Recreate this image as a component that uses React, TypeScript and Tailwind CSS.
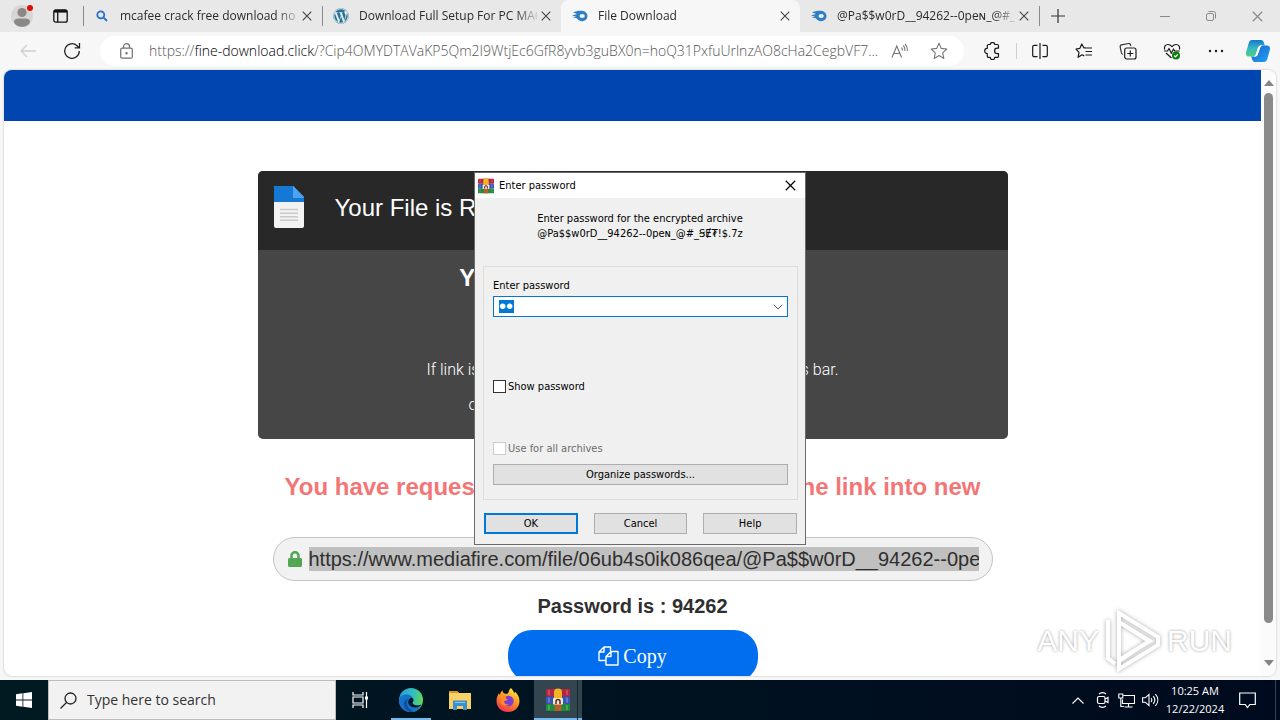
import { ReactNode } from 'react'
import { FaWordpress, FaLock } from 'react-icons/fa'

interface TabProps {
  title: string
  icon: ReactNode
  active?: boolean
}

function CloseIcon({ className = 'w-2.5 h-2.5' }: { className?: string }) {
  return (
    <svg viewBox="0 0 10 10" className={className} fill="none" stroke="currentColor" strokeWidth="1.1">
      <path d="M.7.7l8.6 8.6M9.3.7L.7 9.3" />
    </svg>
  )
}

function MediafireIcon() {
  return (
    <svg viewBox="0 0 16 16" className="w-4 h-4">
      <path
        d="M1 4.6C3.500 3 7 2.400 9.800 2.700c3.400.3 5.700 2.500 5.700 5.300 0 2.900-2.400 5.200-5.300 5.200-2.300 0-3.700-1.200-5-2.400-1-.9-2.400-1.200-4.700-.9 1.300-.9 2.300-1.200 3.600-1.200C3 7.900 2.200 7.800 0 8.200c1.400-1.300 3-1.800 4.800-1.900C3.900 5.400 2.600 4.900 1 4.600z"
        fill="#2f7fc4"
      />
      <ellipse cx="10.200" cy="8" rx="2.600" ry="2.100" fill="#f0f6fb" />
    </svg>
  )
}

function WinrarIcon({ className = 'w-4 h-4' }: { className?: string }) {
  return (
    <svg viewBox="0 0 24 24" className={className}>
      <rect x="0" y="1" width="24" height="7.500" rx="1" fill="#b5263f" />
      <rect x="0" y="8.500" width="24" height="7.500" rx="1" fill="#3a53b4" />
      <rect x="0" y="16" width="24" height="7" rx="1" fill="#1f8a3b" />
      <path d="M3 2v5M21 2v5" stroke="#e0706a" strokeWidth="1" />
      <path d="M3 9.500v5M21 9.500v5" stroke="#8fa2e6" strokeWidth="1" />
      <path d="M3 17v5M21 17v5" stroke="#6cc46c" strokeWidth="1" />
      <path d="M8.500 1h7v22h-7z" fill="#b5602a" />
      <path d="M8 10V4.500a4 4 0 018 0V10z" fill="#f5b428" />
      <rect x="7" y="10" width="10" height="6.500" rx="1" fill="#f3e6d2" />
      <path d="M10 16v-2.500a2 2 0 014 0V16" fill="none" stroke="#53301c" strokeWidth="1.500" />
    </svg>
  )
}

function Tab({ title, icon, active }: TabProps) {
  return (
    <div
      role="tab"
      aria-selected={!!active}
      className={
        active
          ? 'flex items-center w-[239px] h-full pl-[11px] pr-2.5 bg-[#f7f7f7] rounded-t-lg'
          : 'flex items-center w-[239px] h-full pl-[11px] pr-2.5'
      }
    >
      <span className="w-4 h-4 shrink-0 flex items-center justify-center">{icon}</span>
      <span className="ml-2.5 flex-1 min-w-0 overflow-hidden whitespace-nowrap text-[12px] leading-4 text-[#2b2b2b] [mask-image:linear-gradient(to_right,black_156px,transparent_182px)]">
        {title}
      </span>
      <button aria-label="Close tab" className="ml-1 text-[#444]">
        <CloseIcon />
      </button>
    </div>
  )
}

function TabStrip() {
  return (
    <div className="flex items-center h-8 shrink-0 bg-[#e8e8e8]">
      <button aria-label="Profile" className="relative ml-[11px]">
        <svg viewBox="0 0 22 22" className="w-[22px] h-[22px]">
          <circle cx="11" cy="11" r="11" fill="#d8d6d4" />
          <circle cx="11" cy="7.500" r="4.600" fill="#8b8886" />
          <path d="M3 16.500C3 14 6 13.500 11 13.500s8 .5 8 3c0 3-4 5.300-8 5.300s-8-2.300-8-5.300z" fill="#8b8886" />
        </svg>
        <span className="absolute top-0 right-0 w-1.5 h-1.5 rounded-full bg-[#e00b0b]" />
      </button>
      <button aria-label="Tab actions" className="ml-5 mr-[15px]">
        <svg viewBox="0 0 15 14" className="w-[15px] h-3.5" fill="none" stroke="#111" strokeWidth="1.300">
          <rect x=".8" y=".8" width="13.400" height="12.400" rx="2" />
          <path d="M1 2.300h13" strokeWidth="2.600" />
          <path d="M4.700 3v10" />
        </svg>
      </button>
      <div role="tablist" className="flex items-center h-full">
        <span className="w-px h-5 -mr-px bg-[#8a8a8a]" />
        <Tab
          title="mcafee crack free download no vi"
          icon={
            <svg viewBox="0 0 12 12" className="w-3 h-3" fill="none" stroke="#2a72c8" strokeWidth="1.800">
              <circle cx="4.800" cy="4.800" r="3.500" />
              <path d="M7.400 7.400l3.600 3.600" />
            </svg>
          }
        />
        <span className="w-px h-5 -mr-px bg-[#8a8a8a]" />
        <Tab title="Download Full Setup For PC MAC" icon={<FaWordpress className="w-4 h-4 text-[#21759b]" />} />
        <Tab title="File Download" icon={<MediafireIcon />} active />
        <Tab title="@Pa$$w0rD__94262--0peɴ_@#_Ɇ" icon={<MediafireIcon />} />
        <span className="w-px h-5 bg-[#8a8a8a]" />
      </div>
      <button aria-label="New tab" className="ml-[11px] text-[#333]">
        <svg viewBox="0 0 14 14" className="w-3.5 h-3.5" stroke="currentColor" strokeWidth="1.200">
          <path d="M7 0v14M0 7h14" />
        </svg>
      </button>
      <div className="ml-auto flex text-[#8a8a8a]">
        <button aria-label="Minimize" className="w-[46px] h-8 flex items-center justify-center">
          <svg viewBox="0 0 10 10" className="w-2.5 h-2.5" stroke="currentColor">
            <path d="M0 5.500h10" />
          </svg>
        </button>
        <button aria-label="Restore" className="w-[46px] h-8 flex items-center justify-center">
          <svg viewBox="0 0 10 10" className="w-2.5 h-2.5" fill="none" stroke="currentColor">
            <rect x=".5" y="2.500" width="7" height="7" rx="1.500" />
            <path d="M2.500.5h5a2 2 0 012 2v5" />
          </svg>
        </button>
        <button aria-label="Close" className="w-[46px] h-8 flex items-center justify-center">
          <CloseIcon className="w-[11px] h-[11px]" />
        </button>
      </div>
    </div>
  )
}

function ToolButton({ label, children }: { label: string; children: ReactNode }) {
  return (
    <button aria-label={label} className="w-11 h-8 flex items-center justify-center shrink-0">
      <svg viewBox="0 0 18 18" className="w-[18px] h-[18px]" fill="none" stroke="#1b1b1b" strokeWidth="1.200" strokeLinejoin="round">
        {children}
      </svg>
    </button>
  )
}

function Toolbar() {
  return (
    <div className="flex items-center h-[38px] shrink-0 pl-1.5 bg-[#f7f7f7]">
      <button aria-label="Back" className="w-11 flex justify-center">
        <svg viewBox="0 0 16 14" className="w-4 h-3.5" fill="none" stroke="#cfcfcf" strokeWidth="1.300">
          <path d="M16 7H1M7 1L1 7l6 6" />
        </svg>
      </button>
      <button aria-label="Refresh" className="w-11 flex justify-center">
        <svg viewBox="0 0 18 18" className="w-[18px] h-[18px]" fill="none" stroke="#222" strokeWidth="1.300">
          <path d="M16.300 9A7.300 7.300 0 1114 3.700l2 1.800M16.500 1v4.800h-4.800" />
        </svg>
      </button>
      <div className="flex items-center flex-1 min-w-0 h-[30px] ml-1.5 pl-5 pr-4 rounded-full bg-white">
        <svg viewBox="0 0 13 16" className="w-[13px] h-4 shrink-0" fill="none" stroke="#707070" strokeWidth="1.200">
          <rect x=".7" y="5.200" width="11.600" height="10" rx="1.500" />
          <path d="M3.500 5V3.700a3 3 0 016 0V5" />
          <circle cx="6.500" cy="10.200" r=".6" fill="#707070" />
        </svg>
        <a
          href="#"
          className="ml-4 flex-1 min-w-0 overflow-hidden whitespace-nowrap text-[14px] leading-5 font-light text-[#555]"
        >
          https://<span className="text-black">fine-download.click</span>
          /?Cip4OMYDTAVaKP5Qm2I9WtjEc6GfR8yvb3guBX0n=hoQ31PxfuUrlnzAO8cHa2CegbVF7...
        </a>
        <button aria-label="Read aloud" className="ml-1">
          <svg viewBox="0 0 17 16" className="w-[17px] h-4" fill="none" stroke="#777" strokeWidth="1.100">
            <path d="M1 14.500L5.800 3l4.800 11.500M2.700 10.500h6.200M10.500 4.500c.8.800 1 1.800.8 3M12.200 2.500c1.500 1.400 1.900 3.200 1.500 5.300M14 1c2 1.800 2.600 4 2.200 6.800" />
          </svg>
        </button>
        <button aria-label="Add to favorites" className="ml-[22px]">
          <svg viewBox="0 0 18 18" className="w-[18px] h-[18px]" fill="none" stroke="#777" strokeWidth="1.100" strokeLinejoin="round">
            <path d="M9 1.300l2.300 5.100 5.500.6-4.100 3.800 1.100 5.600L9 13.600l-4.800 2.800 1.100-5.600L1.200 7l5.500-.6z" />
          </svg>
        </button>
      </div>
      <div className="flex items-center ml-1.5">
        <ToolButton label="Extensions">
          <path d="M5.500 2.500h1.800a2.200 2.200 0 014.400 0h2.600a1.200 1.200 0 011.200 1.200v2.500h-1.200a2.700 2.700 0 000 5.400h1.200v2.600a1.200 1.200 0 01-1.200 1.200h-2.600a2.200 2.200 0 01-4.400 0H5.500a1.200 1.200 0 01-1.200-1.200v-2.700a2.600 2.600 0 010-5.200V3.700a1.200 1.200 0 011.200-1.200z" />
        </ToolButton>
        <span className="w-px h-4 ml-0.5 mr-px bg-[#cfcfcf]" />
        <ToolButton label="Split screen">
          <path d="M9 1v16M6.500 3.300H3.200a1.500 1.500 0 00-1.500 1.500v8.400a1.500 1.500 0 001.500 1.500h3.300M11.500 3.300h3.300a1.500 1.500 0 011.500 1.500v8.400a1.500 1.500 0 01-1.500 1.500h-3.300" />
        </ToolButton>
        <ToolButton label="Favorites">
          <path d="M10.500 5.800H8.800L6.800 2 4.900 6.300 1 7l3 3.300-.9 5 4-2.500 2.200 1.300M10.500 6h6.500M10.500 9.500h6.500M10.500 13h6.500" />
        </ToolButton>
        <ToolButton label="Collections">
          <path d="M4 12.500c-1-.4-1.500-1-1.700-2L1.200 4.800c-.2-1 .3-1.700 1.300-1.900l7-1.400c1-.2 1.800.3 2 1.300l.3 1.200" stroke="#333" />
          <rect x="5.700" y="6" width="11.300" height="11" rx="2" />
          <path d="M11.300 8.500v6M8.300 11.500h6" />
        </ToolButton>
        <ToolButton label="Browser essentials">
          <path d="M1.600 7.500c-.8-3 1-5 3.300-5C6.800 2.500 8 3.500 9 4.700c1-1.200 2.200-2.200 4.100-2.200 2.400 0 4.200 2 3.300 5M1 9h3.500l1.500-2.500 2.300 4.800L10.500 7l1.200 2h5M3 11l5.500 5" />
          <circle cx="13" cy="13.500" r="4" fill="#107c10" stroke="none" />
          <path d="M11.200 13.500l1.300 1.300 2.300-2.500" stroke="#fff" />
        </ToolButton>
        <ToolButton label="Settings and more">
          <g fill="#1b1b1b" stroke="none">
            <circle cx="3" cy="9" r="1.200" />
            <circle cx="9" cy="9" r="1.200" />
            <circle cx="15" cy="9" r="1.200" />
          </g>
        </ToolButton>
        <button aria-label="Copilot" className="ml-2 mr-2.5">
          <svg viewBox="0 0 24 22" className="w-6 h-[22px]">
            <defs>
              <linearGradient id="copilotLeft" x1="0" y1="0" x2="0" y2="1">
                <stop offset="0" stopColor="#1577c9" />
                <stop offset=".5" stopColor="#35b8c8" />
                <stop offset="1" stopColor="#52cf7b" />
              </linearGradient>
              <linearGradient id="copilotRight" x1="0" y1="0" x2="1" y2="1">
                <stop offset="0" stopColor="#1d5fd0" />
                <stop offset="1" stopColor="#1ea6f2" />
              </linearGradient>
            </defs>
            <path d="M6 0h9c2 0 2.500 1.500 3 3l.8 2.500H15c-2 0-2.700 1.500-3.300 3.500L10 14c-.6 1.600-1.500 2.500-3 2.500H3c-2.500 0-3.500-2-2.800-4.500l2.500-9C3.300 1 4.300 0 6 0z" fill="url(#copilotLeft)" />
            <path d="M18 22H9c-2 0-2.500-1.500-3-3l-.8-2.500H9c2 0 2.700-1.500 3.300-3.500L14 8c.6-1.600 1.500-2.500 3-2.500h4c2.500 0 3.500 2 2.800 4.500l-2.500 9c-.6 2-1.600 3-3.300 3z" fill="url(#copilotRight)" />
            <path d="M11.500 9c.6-2 1.500-3.500 3.500-3.500h2c-1.500 0-2.400.9-3 2.500l-1.700 5c-.6 2-1.300 3.500-3.300 3.500H7c1.500 0 2.400-.9 3-2.500z" fill="#fff" />
          </svg>
        </button>
      </div>
    </div>
  )
}

function DownloadPage() {
  return (
    <main className="flex-1 min-w-0 overflow-hidden font-['Liberation_Sans',Arial,sans-serif]">
      <header className="h-[51px] bg-[#0045b0]" />
      <div className="max-w-[750px] mx-auto pt-[50px] text-center">
        <section className="h-[268px] rounded-[5px] overflow-hidden bg-[#464646] text-white">
          <div className="flex items-center h-[79px] pl-[15px] pb-1.5 bg-[#282828]">
            <svg viewBox="0 0 32 43" className="w-8 h-[43px]">
              <path d="M2 0h18l11 11v29a2 2 0 01-2 2H3a2 2 0 01-2-2V1z" fill="#f3f3f3" />
              <path d="M2 0h18l11 11v5H1V1z" fill="#1478d4" />
              <path d="M20 0l11 12H20z" fill="#4ea3ee" />
              <path d="M7 23.500h18M7 27.200h18M7 30.800h18M7 34.300h18" stroke="#c9c9c9" strokeWidth="1.500" />
            </svg>
            <h1 className="ml-[30px] text-[24px] leading-8">Your File is Ready</h1>
          </div>
          <h2 className="mt-3 text-[24px] leading-8 font-bold">Your File Is ready to download</h2>
          <div className="mt-[60px] px-[169px] flex justify-between text-[16px] leading-8 font-light font-[Roboto,sans-serif] whitespace-nowrap">
            <span>If link is not working</span>
            <span>in address bar.</span>
          </div>
          <p className="mt-[3px] text-[16px] leading-8 font-light font-[Roboto,sans-serif]">
            or use another browser to download this file no
          </p>
        </section>
        <div className="mt-8 px-[27px] flex justify-between text-[24px] leading-8 font-bold text-[#f37676]">
          <span>You have requested</span>
          <span>the link into new</span>
        </div>
        <div className="mt-[34px] mx-[15px] h-11 px-[13px] flex items-center rounded-full border border-[#c4c4c4] bg-[#f2f2f2]">
          <FaLock className="w-4 h-4 shrink-0 text-[#53a653]" />
          <input
            aria-label="Download link"
            readOnly
            defaultValue="https://www.mediafire.com/file/06ub4s0ik086qea/@Pa$$w0rD__94262--0pe"
            className="ml-1.5 flex-1 min-w-0 h-6 bg-[#c0c0c0] text-[20px] leading-6 text-[#2f2f2f] outline-none"
          />
        </div>
        <p className="mt-[13px] text-[20px] leading-6 font-bold text-[#2f2f2f]">Password is : 94262</p>
        <button className="mt-3 w-[250px] h-[52px] rounded-[24px] bg-[#006eef] text-white text-[20px] font-['Liberation_Serif','Times_New_Roman',serif] inline-flex items-center justify-center gap-1">
          <svg viewBox="0 0 21 20" className="w-[21px] h-5" fill="none" stroke="currentColor" strokeWidth="1.400" strokeLinejoin="round">
            <path d="M8 14.500H1V6l5-5h6.500v4M6 1v5H1M8 10.500l5-5h7V19H8zM13 5.500v5H8" />
          </svg>
          Copy
        </button>
      </div>
    </main>
  )
}

function Watermark() {
  return (
    <div className="absolute right-11 bottom-1 flex items-center gap-1.5 text-[30px] leading-none text-white font-['Liberation_Sans',Arial,sans-serif] [text-shadow:0_0_3px_#999] pointer-events-none">
      <span>ANY</span>
      <svg viewBox="0 0 56 62" className="w-14 h-[62px] drop-shadow-[0_0_2px_#aaa]" fill="none" stroke="#fff" strokeWidth="4">
        <path d="M14 3l39 24v8L14 59v-8l30-20L14 12zM3 10v38l7 6M14 12v38l31-19z" />
      </svg>
      <span>RUN</span>
    </div>
  )
}

const dialogButton = 'h-[21px] border border-[#adadad] bg-[#e1e1e1] text-center leading-[19px]'

function PasswordDialog() {
  return (
    <div
      role="dialog"
      aria-label="Enter password"
      className="absolute left-1/2 top-[172px] -translate-x-1/2 w-[332px] border border-[#6a6a6a] bg-[#f0f0f0] text-[11px] leading-[15px] text-black font-['DejaVu_Sans_Condensed','Noto_Sans',sans-serif]"
    >
      <div className="flex items-center h-[25px] pl-[3px] pr-[9px] bg-white">
        <WinrarIcon />
        <span className="ml-[5px] flex-1">Enter password</span>
        <button aria-label="Close dialog">
          <CloseIcon className="w-[11px] h-[11px]" />
        </button>
      </div>
      <p className="mt-[13px] text-center">
        Enter password for the encrypted archive
        <br />
        @Pa$$w0rD__94262--0peɴ_@#_ꞨɆ₮!$.7z
      </p>
      <div className="mt-[25px] ml-2 mr-[7px] h-[234px] px-[9px] flex flex-col border border-[#dcdcdc]">
        <label htmlFor="password" className="mt-[11px]">Enter password</label>
        <div className="mt-[3px] h-[21px] flex items-center justify-between pl-[5px] pr-1 border border-[#0078d7] bg-white">
          <input
            id="password"
            type="password"
            defaultValue="ab"
            className="w-[15px] h-[13px] bg-[#0078d7] text-white text-[20px] leading-[13px] font-['Liberation_Sans',sans-serif] outline-none"
          />
          <svg viewBox="0 0 10 6" className="w-2.5 h-1.5" fill="none" stroke="#555">
            <path d="M.8.8L5 5 9.200.8" />
          </svg>
        </div>
        <label className="mt-[62px] flex items-center gap-0.5">
          <input type="checkbox" className="appearance-none w-[13px] h-[13px] border border-[#333] bg-white" />
          Show password
        </label>
        <label className="mt-[47px] flex items-center gap-0.5 text-[#6d6d6d]">
          <input type="checkbox" disabled className="appearance-none w-[13px] h-[13px] border border-[#ccc] bg-white" />
          Use for all archives
        </label>
        <button className={dialogButton + ' mt-2'}>Organize passwords...</button>
      </div>
      <div className="mt-[13px] mb-2.5 ml-[9px] mr-2 grid grid-cols-3 gap-4">
        <button className="h-[21px] border-2 border-[#0078d7] bg-[#e1e1e1] text-center leading-[17px]">OK</button>
        <button className={dialogButton}>Cancel</button>
        <button className={dialogButton}>Help</button>
      </div>
    </div>
  )
}

function Taskbar() {
  return (
    <footer className="flex items-center h-10 shrink-0 bg-linear-to-r from-[#001a22] to-[#000a1e] text-white">
      <button aria-label="Start" className="w-12 h-10 flex items-center justify-center">
        <svg viewBox="0 0 16 16" className="w-4 h-4" fill="#fff">
          <path d="M0 2.200l6.500-.9v6.300H0zM7.300 1.200L16 0v7.600H7.300zM0 8.400h6.500v6.300L0 13.800zM7.300 8.400H16V16l-8.700-1.200z" />
        </svg>
      </button>
      <label className="flex items-center w-72 h-10 pl-[11px] border border-[#bdbdbd] bg-[#f2f2f2]">
        <svg viewBox="0 0 17 17" className="w-[17px] h-[17px] shrink-0" fill="none" stroke="#222" strokeWidth="1.300">
          <circle cx="10.500" cy="6.500" r="5.500" />
          <path d="M6.500 10.500L.5 16.500" />
        </svg>
        <input
          aria-label="Search"
          placeholder="Type here to search"
          className="ml-2.5 flex-1 min-w-0 bg-transparent text-[14px] leading-5 placeholder:text-[#333] outline-none"
        />
      </label>
      <button aria-label="Task view" className="w-12 h-10 flex items-center justify-center">
        <svg viewBox="0 0 17 16" className="w-[17px] h-4" fill="none" stroke="#fff" strokeWidth="1.200">
          <path d="M1 0v3h10V0M1 16v-3h10v3M1 5h10v6H1zM14.500 0v16" />
          <path d="M13 4.500h3v3h-3z" fill="#fff" stroke="none" />
        </svg>
      </button>
      <button aria-label="Microsoft Edge" className="relative w-[54px] h-10 flex items-center justify-center">
        <svg viewBox="0 0 24 24" className="w-6 h-6">
          <defs>
            <linearGradient id="edgeTop" x1="0" y1=".3" x2="1" y2=".5">
              <stop offset="0" stopColor="#2a9fe0" />
              <stop offset=".6" stopColor="#35c1b5" />
              <stop offset="1" stopColor="#65d651" />
            </linearGradient>
          </defs>
          <circle cx="12" cy="12" r="12" fill="url(#edgeTop)" />
          <path d="M0 12C.5 8 4 6.500 7.500 6.500c4 0 7 2.500 7 5.500 0 1.500-1 2-1 3 0 1.500 2.500 2.500 4.700 2.500 2 0 3.500-.7 4.300-1C20.500 21 16.500 24 12 24 5 24-.5 18.500 0 12z" fill="#1672c9" />
          <path d="M9 11c-3 4.500-.5 10.500 6 12.600C9 24.800 5 20.500 5 16c0-2.500 1.500-4.300 4-5z" fill="#0d4d9b" />
          <path d="M14.500 12c0 1.500-1 2-1 3 0 1.500 2.500 2.500 4.700 2.500 2 0 3.500-.7 4.300-1-.8 1.500-3.500 3-6.500 3-4 0-6.800-2.600-6.800-5.400 0-2 1.200-3.600 3-4.300 1.300.3 2.300 1 2.300 2.200z" fill="#00192a" />
        </svg>
        <span className="absolute bottom-0 inset-x-[7px] h-0.5 bg-[#76b9ed]" />
      </button>
      <button aria-label="File Explorer" className="w-[43px] h-10 flex items-center justify-center">
        <svg viewBox="0 0 22 20" className="w-[22px] h-5">
          <path d="M0 1h8l2 2h12v16H0z" fill="#f8d064" />
          <path d="M0 1h8l2 2H0z" fill="#e0922a" />
          <path d="M4 10.500h14V20h-4v-4H8v4H4z" fill="#3a8fd0" />
          <path d="M6 12.500h10" stroke="#8cc7ee" />
        </svg>
      </button>
      <button aria-label="Firefox" className="w-[53px] h-10 flex items-center justify-center">
        <svg viewBox="0 0 24 24" className="w-6 h-6">
          <defs>
            <linearGradient id="foxBody" x1=".8" y1="0" x2=".3" y2="1">
              <stop offset="0" stopColor="#fff04a" />
              <stop offset=".5" stopColor="#ff9023" />
              <stop offset="1" stopColor="#f0304f" />
            </linearGradient>
          </defs>
          <path d="M15 0c2 2 2.500 4 4 5.500 0-1 0-1.500-.3-2.300 2.700 2.500 4.800 5.500 4.800 9.800C23.500 19.500 18.500 24 12 24S.5 19.500.5 13c0-3 .8-5.500 2.500-8 .2 1 .4 1.500 1 2 .3-2 1-3.500 2.500-4.500 0 1.500.8 2.500 2 3C10 6 12 6 12.500 4.500 12.700 3 13.500 1 15 0z" fill="url(#foxBody)" />
          <circle cx="12.500" cy="13" r="5.200" fill="#7a3fd0" />
          <path d="M5 8c2-1 4-.5 5.500.8C9 10 9.500 11 12 11.500c-1.500 1.500-3 1-4 1.800C8 16 11 17 13 16c-2 3-8 2-8.500-2.500z" fill="#ff8a2a" />
        </svg>
      </button>
      <button aria-label="WinRAR" className="relative w-12 h-10 flex items-center justify-center bg-[#33454f]">
        <WinrarIcon className="w-6 h-6" />
        <span className="absolute bottom-0 inset-x-0 h-0.5 bg-[#76b9ed]" />
        <span className="absolute inset-y-0 right-1 w-px bg-[#15272f]" />
      </button>
      <div className="ml-auto flex items-center">
        <button aria-label="Show hidden icons">
          <svg viewBox="0 0 12 7" className="w-3 h-[7px]" fill="none" stroke="#fff" strokeWidth="1.200">
            <path d="M.5 6.500L6 1l5.500 5.500" />
          </svg>
        </button>
        <button aria-label="Meet now" className="ml-3">
          <svg viewBox="0 0 14 16" className="w-3.5 h-4" fill="none" stroke="#fff" strokeWidth="1.200">
            <rect x="1.500" y="4.500" width="7.500" height="7" rx="1.500" />
            <path d="M9 7l3-1.500v5L9 9M3 2c2-1.600 5-1.600 7 0M3 14c2 1.600 5 1.600 7 0" />
          </svg>
        </button>
        <button aria-label="Network" className="ml-2">
          <svg viewBox="0 0 17 15" className="w-[17px] h-[15px]" fill="none" stroke="#fff" strokeWidth="1.100">
            <path d="M5.500 2.500h11v8H4.500V6.500M10.500 10.500v3M6.500 14h8M.8 1h4v4h-4zM2.800 5v8.500h3" />
          </svg>
        </button>
        <button aria-label="Volume" className="ml-[7px]">
          <svg viewBox="0 0 17 14" className="w-[17px] h-3.5" fill="none" stroke="#fff" strokeWidth="1.100">
            <path d="M.6 4.800h2.600L7 1.500v11L3.200 9.200H.6zM9 5c1 1.200 1 2.800 0 4M11.200 3.200c2 2.300 2 5.300 0 7.600M13.400 1.200c3.200 3.500 3.200 8.100 0 11.600" />
          </svg>
        </button>
        <div className="ml-1.5 w-[60px] text-center text-[11px] leading-[18px] whitespace-nowrap">
          <div>10:25 AM</div>
          <div>12/22/2024</div>
        </div>
        <button aria-label="Notifications" className="ml-3.5">
          <svg viewBox="0 0 17 17" className="w-[17px] h-[17px]" fill="none" stroke="#fff" strokeWidth="1.200">
            <path d="M.7 1h15.600v11.500h-5.500l-2.300 3-2.300-3H.7z" />
          </svg>
        </button>
        <span className="ml-[19px] mr-1 w-px h-10 bg-[#3a4250]" />
      </div>
    </footer>
  )
}

export default function App() {
  return (
    <div className="relative h-screen flex flex-col overflow-hidden bg-[#f7f7f7] font-['Open_Sans','Noto_Sans',sans-serif]">
      <TabStrip />
      <Toolbar />
      <div className="relative flex flex-1 min-h-0 mx-1 mb-1 rounded-lg overflow-hidden bg-white shadow-[0_0_2px_#aaa]">
        <DownloadPage />
        <div className="w-[15px] shrink-0 flex flex-col items-center py-2.5 bg-[#fbfbfb]">
          <svg viewBox="0 0 10 6" className="w-2.5 h-1.5" fill="#858585">
            <path d="M5 0l5 6H0z" />
          </svg>
          <div className="mt-[7px] w-[9px] h-[530px] rounded-full bg-[#8a8a8a]" />
          <svg viewBox="0 0 10 6" className="mt-auto w-2.5 h-1.5" fill="#858585">
            <path d="M0 0h10L5 6z" />
          </svg>
        </div>
        <Watermark />
      </div>
      <Taskbar />
      <PasswordDialog />
    </div>
  )
}
